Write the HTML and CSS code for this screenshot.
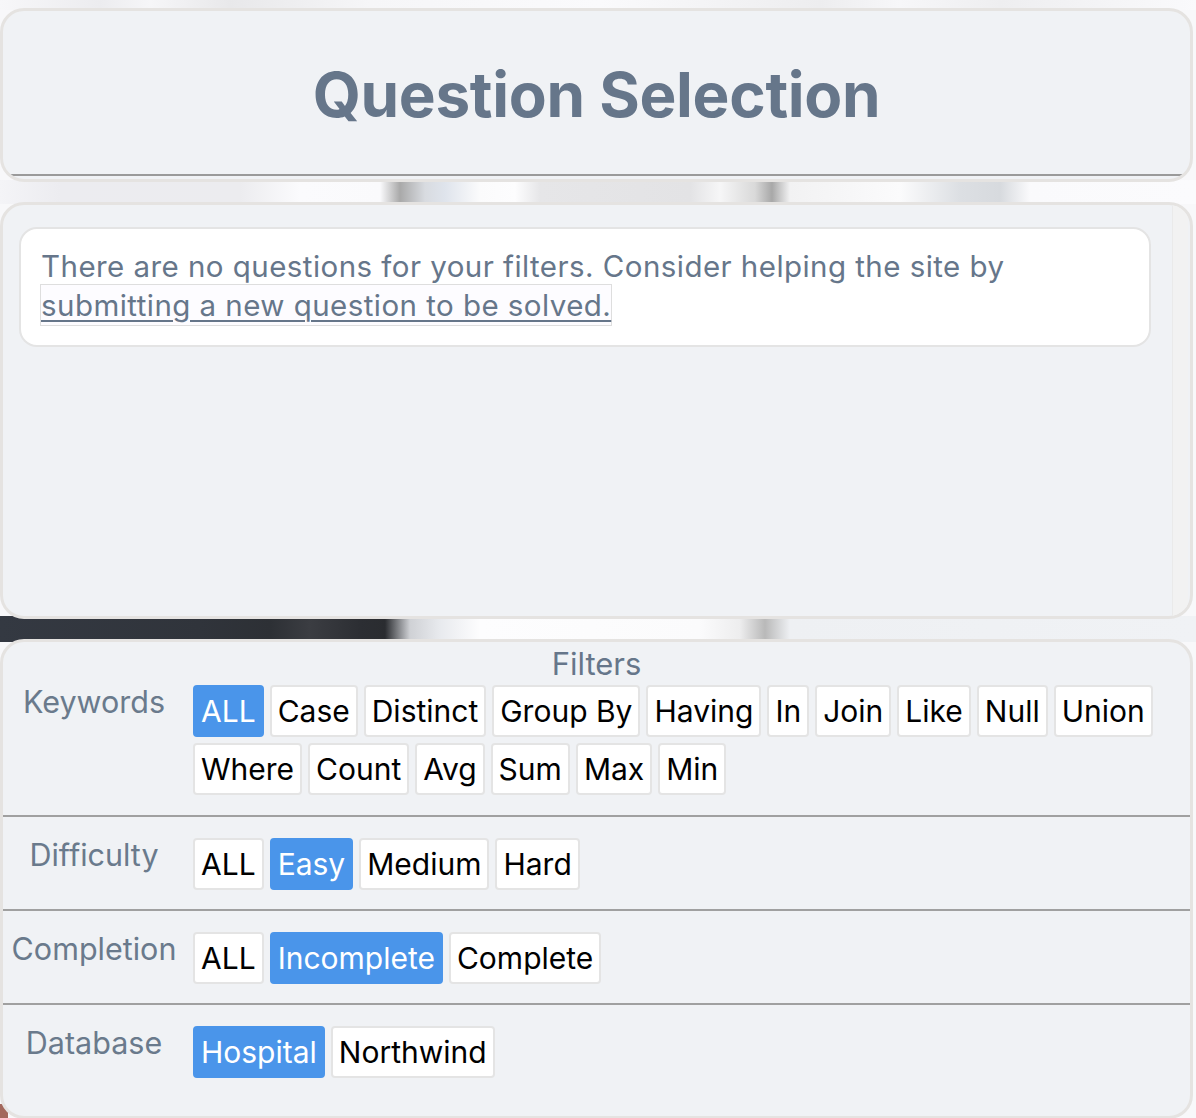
FILE: index.html
```html
<!DOCTYPE html>
<html lang="en">
<head>
<meta charset="utf-8">
<title>Question Selection</title>
<link rel="stylesheet" href="styles.css">
</head>
<body>
<div class="page">
  <section class="card header-card">
    <div class="header">
      <h1 class="title">Question Selection</h1>
    </div>
  </section>

  <section class="card list-card">
    <div class="list-content">
      <div class="notice">There are no questions for your filters. Consider helping the site by <a href="#" class="notice-link">submitting a new question to be solved.</a></div>
    </div>
    <div class="scroll-track"></div>
  </section>

  <section class="card filters-card">
    <div class="filters-title">Filters</div>

    <div class="filter-row first">
      <div class="filter-label">Keywords</div>
      <div class="chips">
        <button class="chip active">ALL</button>
        <button class="chip">Case</button>
        <button class="chip">Distinct</button>
        <button class="chip">Group By</button>
        <button class="chip">Having</button>
        <button class="chip">In</button>
        <button class="chip">Join</button>
        <button class="chip">Like</button>
        <button class="chip">Null</button>
        <button class="chip">Union</button>
        <button class="chip">Where</button>
        <button class="chip">Count</button>
        <button class="chip">Avg</button>
        <button class="chip">Sum</button>
        <button class="chip">Max</button>
        <button class="chip">Min</button>
      </div>
    </div>

    <div class="filter-row">
      <div class="filter-label">Difficulty</div>
      <div class="chips">
        <button class="chip">ALL</button>
        <button class="chip active">Easy</button>
        <button class="chip">Medium</button>
        <button class="chip">Hard</button>
      </div>
    </div>

    <div class="filter-row">
      <div class="filter-label">Completion</div>
      <div class="chips">
        <button class="chip">ALL</button>
        <button class="chip active">Incomplete</button>
        <button class="chip">Complete</button>
      </div>
    </div>

    <div class="filter-row">
      <div class="filter-label">Database</div>
      <div class="chips">
        <button class="chip active">Hospital</button>
        <button class="chip">Northwind</button>
      </div>
    </div>
  </section>
</div>
</body>
</html>
```

FILE: styles.css
```css
* {
  box-sizing: border-box;
}

html,
body {
  margin: 0;
}

body {
  font-family: Inter, "Liberation Sans", Arial, sans-serif;
  padding: 8px 3px 0 0;
  background:
    linear-gradient(#a3685c, #a3685c) 0 1104px / 8px 14px no-repeat,
    linear-gradient(90deg,
      #343942 0, #30343b 200px, #2d3035 270px, #3b3d42 310px, #2c2e33 360px,
      #2a2c30 385px, #cfd1d5 410px, #e8eaee 440px, #fdfdfe 480px,
      #fbfbfc 700px, #ededee 740px, #b9b9b9 765px, #eef0f3 790px, #f0f2f5 1196px) 0 616px / 100% 26px no-repeat,
    linear-gradient(90deg,
      #f4f4f7 0, #ececf0 60px, #ececef 240px, #fbfbfd 300px, #fafafc 380px,
      #a9a9a9 400px, #d8dbe0 425px, #dfe4ec 445px, #fbfbfc 480px, #fdfdfe 515px,
      #e6e6e8 540px, #e3e3e5 690px, #f6f6f7 720px, #d9d9d9 755px, #a8a8a8 772px,
      #f2f2f3 790px, #fbfbfc 900px, #dcdfe3 960px, #d7dade 1000px, #fafafc 1030px, #fbfbfd 1196px) 0 180px / 100% 24px no-repeat,
    linear-gradient(90deg,
      #f7f7f9 0, #ececef 100px, #f6f6f8 150px, #e8e8ea 230px, #f6f6f8 370px,
      #fafafc 600px, #ededef 820px, #f7f7f9 900px, #eeeef0 1000px, #fafafc 1196px) 0 0 / 100% 10px no-repeat,
    #f8f8fa;
}

.page {
  display: flex;
  flex-direction: column;
  gap: 20px;
}

.card {
  background: #f0f2f5;
  border: 3px solid #e5e3e1;
  border-radius: 24px;
  overflow: hidden;
}

/* Header */
.header-card {
  height: 174px;
  padding-bottom: 3px;
}

.header {
  height: 100%;
  padding-top: 48px;
  text-align: center;
  border-bottom: 2px solid #9a9a9a;
}

.title {
  margin: 0;
  font-size: 62px;
  line-height: 71px;
  font-weight: 700;
  letter-spacing: -0.3px;
  color: #66768a;
}

/* Question list */
.list-card {
  height: 417px;
  display: flex;
}

.list-content {
  flex: 1;
  padding: 22px 21px 0 16px;
}

.notice {
  background: #ffffff;
  border: 2px solid #e4e4e4;
  border-radius: 18px;
  padding: 18px 20px 20px;
  font-size: 29.5px;
  line-height: 38px;
  letter-spacing: 0.45px;
  color: #66768a;
}

.notice-link {
  display: inline-block;
  color: #66768a;
  text-decoration: underline;
  text-decoration-thickness: 2px;
  text-underline-offset: 4px;
  background: #fdfcff;
  box-shadow: 0 0 0 1px #dedede;
  padding: 1px 0;
}

.scroll-track {
  width: 16px;
  margin-right: 2px;
  background: #f2f2f2;
  border-left: 1px solid #eaeaea;
}

/* Filters */
.filters-card {
  padding: 3px 0 19px;
}

.filters-title {
  text-align: center;
  font-size: 31px;
  line-height: 37px;
  color: #66768a;
}

.filter-row {
  display: flex;
  align-items: flex-start;
  padding: 21px 0 19px;
  border-top: 2px solid #a0a0a0;
}

.filter-row.first {
  border-top: none;
  padding-top: 3px;
  padding-bottom: 20px;
}

.filter-label {
  flex: 0 0 182px;
  margin: -2px 8px 0 0;
  text-align: center;
  font-size: 30.5px;
  line-height: 37px;
  color: #6a7a8c;
}

.chips {
  flex: 1;
  display: flex;
  flex-wrap: wrap;
  gap: 6px 6px;
}

.chip {
  font-family: inherit;
  font-size: 30px;
  line-height: 48px;
  height: 52px;
  padding: 0 6px;
  margin: 0;
  border: 2px solid #e4e4e4;
  border-radius: 4px;
  background: #ffffff;
  color: #000000;
  cursor: pointer;
}

.chip.active {
  background: #4a95ea;
  border-color: #4a95ea;
  color: #ffffff;
}
```
